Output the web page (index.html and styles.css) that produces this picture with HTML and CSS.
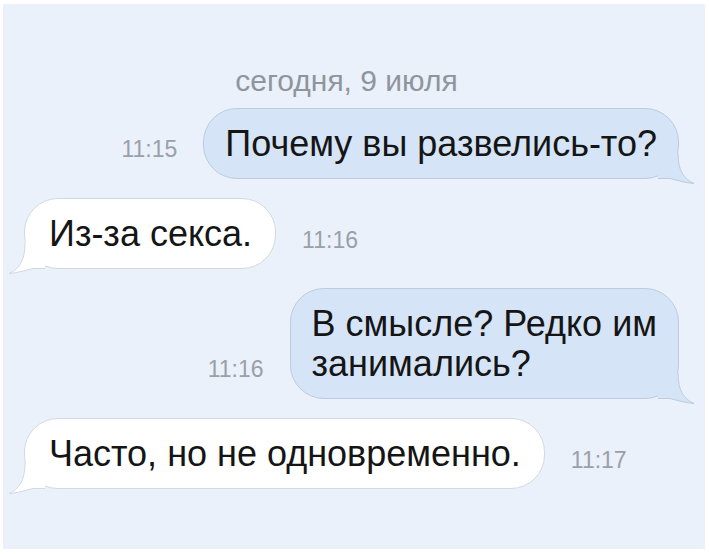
FILE: index.html
```html
<!DOCTYPE html>
<html lang="ru">
<head>
<meta charset="utf-8">
<link rel="stylesheet" href="styles.css">
</head>
<body>
<div class="screen">
  <div class="date">сегодня, 9 июля</div>
  <div class="thread">
    <div class="row out">
      <span class="time">11:15</span>
      <div class="bubble blue">Почему вы развелись-то?
        <svg class="tail" viewBox="0 0 40 44" width="40" height="44"><path class="tf" d="M2 35.5 L14 35.5 C22 37.5 30 40 38 40.5 C28 36 22 28 22 10 L2 10 Z"/><path class="ts" d="M2 35.5 L14 35.5 C22 37.5 30 40 38 40.5 C28 36 22 28 22 10"/></svg>
      </div>
    </div>
    <div class="row in">
      <div class="bubble white">Из-за секса.
        <svg class="tail" viewBox="0 0 40 44" width="40" height="44"><path class="tf" d="M2 35.5 L14 35.5 C22 37.5 30 40 38 40.5 C28 36 22 28 22 10 L2 10 Z"/><path class="ts" d="M2 35.5 L14 35.5 C22 37.5 30 40 38 40.5 C28 36 22 28 22 10"/></svg>
      </div>
      <span class="time">11:16</span>
    </div>
    <div class="row out">
      <span class="time">11:16</span>
      <div class="bubble blue">В смысле? Редко им<br>занимались?
        <svg class="tail" viewBox="0 0 40 44" width="40" height="44"><path class="tf" d="M2 35.5 L14 35.5 C22 37.5 30 40 38 40.5 C28 36 22 28 22 10 L2 10 Z"/><path class="ts" d="M2 35.5 L14 35.5 C22 37.5 30 40 38 40.5 C28 36 22 28 22 10"/></svg>
      </div>
    </div>
    <div class="row in">
      <div class="bubble white">Часто, но не одновременно.
        <svg class="tail" viewBox="0 0 40 44" width="40" height="44"><path class="tf" d="M2 35.5 L14 35.5 C22 37.5 30 40 38 40.5 C28 36 22 28 22 10 L2 10 Z"/><path class="ts" d="M2 35.5 L14 35.5 C22 37.5 30 40 38 40.5 C28 36 22 28 22 10"/></svg>
      </div>
      <span class="time">11:17</span>
    </div>
  </div>
</div>
</body>
</html>
```
FILE: styles.css
```css
html, body {
  margin: 0;
  padding: 0;
  background: #ffffff;
}
body {
  padding: 4px 4px 5px 3px;
  font-family: "Liberation Sans", Arial, sans-serif;
}
.screen {
  width: 702px;
  height: 545px;
  background: #ebf1fa;
  box-sizing: border-box;
  padding: 62px 26px 0 21px;
}
.date {
  text-align: center;
  font-size: 30px;
  line-height: 30px;
  color: #8f959d;
  margin-left: -10px;
}
.thread {
  display: flex;
  flex-direction: column;
  gap: 19px;
  margin-top: 12px;
}
.row {
  display: flex;
  align-items: flex-end;
  gap: 26px;
}
.row.out { justify-content: flex-end; }
.row.in { justify-content: flex-start; }
.time {
  font-size: 23px;
  line-height: 24px;
  color: #9aa0a8;
  margin-bottom: 18px;
}
.row.in .time { margin-bottom: 17px; }
.bubble {
  position: relative;
  font-size: 36px;
  line-height: 40px;
  color: #151515;
  padding: 15px 21px 14px 21px;
  border-radius: 34px;
  border: 1px solid;
}
.bubble.blue {
  background: #d5e4f7;
  border-color: #bccbe0;
}
.bubble.white {
  background: #ffffff;
  border-color: #d3d9e2;
  padding-left: 24px;
  padding-right: 23px;
}
.tail {
  position: absolute;
  bottom: -9px;
  right: -18px;
}
.row.in .tail {
  right: auto;
  left: -18px;
  transform: scaleX(-1);
}
.tail .tf { stroke: none; }
.tail .ts { fill: none; stroke-width: 1; }
.blue .tf { fill: #d5e4f7; }
.blue .ts { stroke: #bccbe0; }
.white .tf { fill: #ffffff; }
.white .ts { stroke: #d3d9e2; }
```
